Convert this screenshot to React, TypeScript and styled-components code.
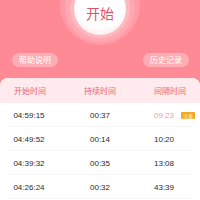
import styled, { createGlobalStyle } from 'styled-components';

const GlobalStyle = createGlobalStyle`
	html, body {
		margin: 0;
		padding: 0;
		background: #fe8a96;
		font-family: 'Noto Sans CJK SC', 'Liberation Sans', sans-serif;
	}
`;

const Page = styled.div`
	width: 200px;
	height: 200px;
	overflow: hidden;
	background: #fe8a96;
	display: flex;
	flex-direction: column;
`;

const Hero = styled.div`
	position: relative;
	height: 78px;
	display: flex;
	flex-direction: column;
	align-items: center;
`;

const Ring = styled.div<{ $size: number; $color: string; $inset: number }>`
	width: ${(p) => p.$size}px;
	height: ${(p) => p.$size}px;
	border-radius: 50%;
	background: ${(p) => p.$color};
	display: flex;
	align-items: flex-end;
	justify-content: center;
	padding-bottom: ${(p) => p.$inset}px;
	box-sizing: border-box;
	flex-shrink: 0;
`;

const OuterRing = styled(Ring)`
	margin-top: -35px;
`;

const StartButton = styled.div`
	width: 52px;
	height: 52px;
	border-radius: 50%;
	background: radial-gradient(circle at 50% 40%, #ffffff 58%, #fde3e7 90%, #ffc9cf 100%);
	display: flex;
	align-items: flex-end;
	justify-content: center;
	padding-bottom: 15px;
	box-sizing: border-box;
	color: #dc5670;
	font-size: 14px;
	line-height: 1;
	flex-shrink: 0;
`;

const ActionRow = styled.div`
	position: absolute;
	left: 12px;
	right: 11px;
	top: 53px;
	display: flex;
	justify-content: space-between;
`;

const PillButton = styled.div`
	height: 14px;
	padding: 0 7px;
	border-radius: 7px;
	background: rgba(255, 255, 255, 0.3);
	color: #ffffff;
	font-size: 8px;
	line-height: 14px;
`;

const Card = styled.div`
	flex: 1;
	background: #ffffff;
	border-radius: 8px 8px 0 0;
	overflow: hidden;
`;

const HeaderRow = styled.div`
	height: 25px;
	background: #ffeaed;
	display: grid;
	grid-template-columns: 60px 80px 60px;
	align-items: center;
	color: #e4667e;
	font-size: 8px;
`;

const Cell = styled.div<{ $tone?: 'alert' }>`
	display: flex;
	align-items: center;
	justify-content: center;
	color: ${(p) => (p.$tone === 'alert' ? '#f19db0' : 'inherit')};
`;

const Row = styled.div`
	height: 24px;
	display: grid;
	grid-template-columns: 58px 84px 44px;
	align-items: center;
	color: #2a2a2a;
	font-family: 'Liberation Sans', sans-serif;
	font-size: 8px;
	background: linear-gradient(#f4f4f4, #f4f4f4) no-repeat center bottom / calc(100% - 16px) 1px;
`;

const Badge = styled.span`
	background: #f5a623;
	color: #fff4dc;
	font-family: 'Noto Sans CJK SC', sans-serif;
	font-size: 5px;
	line-height: 7px;
	padding: 0 2px;
	border-radius: 1px;
	margin-left: 7px;
	margin-right: -21px;
`;

const rows = [
	{ start: '04:59:15', last: '00:37', gap: '09:23', alert: true },
	{ start: '04:49:52', last: '00:14', gap: '10:20' },
	{ start: '04:39:32', last: '00:35', gap: '13:08' },
	{ start: '04:26:24', last: '00:32', gap: '43:39' },
];

function App(): JSX.Element {
	return (
		<Page>
			<GlobalStyle />
			<Hero>
				<OuterRing $size={80} $color="#ff9ba6" $inset={3}>
					<Ring $size={70} $color="#ffa9b2" $inset={4}>
						<Ring $size={60} $color="#ffb9c1" $inset={3}>
							<StartButton>开始</StartButton>
						</Ring>
					</Ring>
				</OuterRing>
				<ActionRow>
					<PillButton>帮助说明</PillButton>
					<PillButton>历史记录</PillButton>
				</ActionRow>
			</Hero>
			<Card>
				<HeaderRow>
					<Cell>开始时间</Cell>
					<Cell>持续时间</Cell>
					<Cell>间隔时间</Cell>
				</HeaderRow>
				{rows.map((r) => (
					<Row key={r.start}>
						<Cell>{r.start}</Cell>
						<Cell>{r.last}</Cell>
						<Cell $tone={r.alert ? 'alert' : undefined}>
							{r.gap}
							{r.alert && <Badge>注意</Badge>}
						</Cell>
					</Row>
				))}
			</Card>
		</Page>
	);
}

export default App;
